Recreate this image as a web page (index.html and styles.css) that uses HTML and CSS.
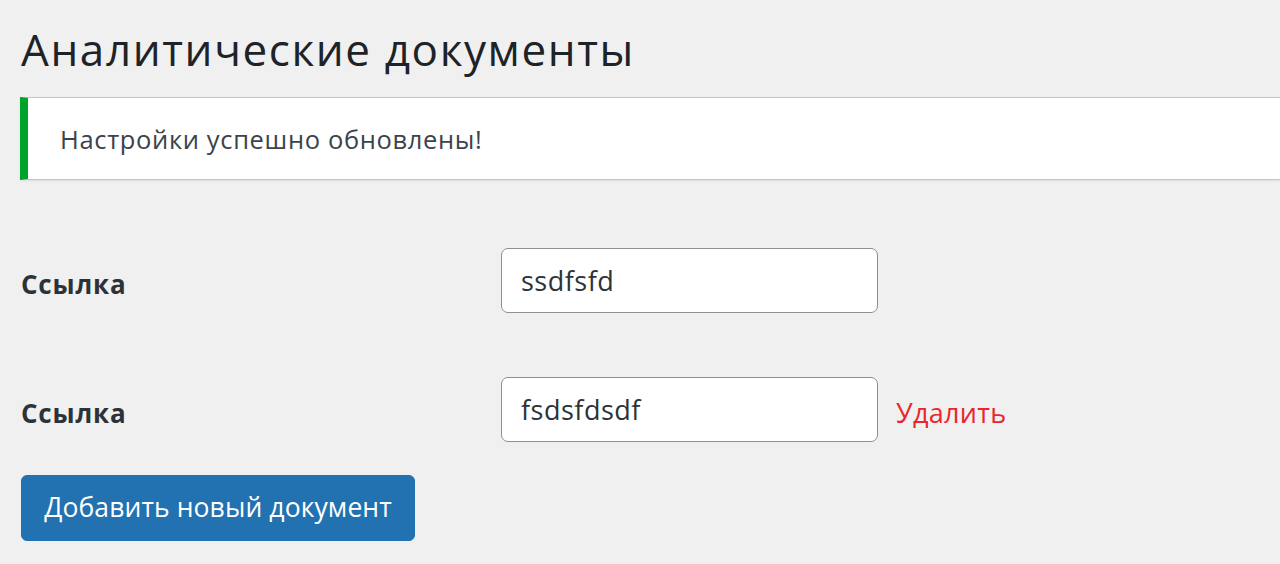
FILE: index.html
```html
<!DOCTYPE html>
<html lang="ru">
<head>
<meta charset="utf-8">
<link rel="stylesheet" href="styles.css">
</head>
<body>
<div class="wrap">
  <h1 class="page-title">Аналитические документы</h1>
  <div class="notice">
    <p>Настройки успешно обновлены!</p>
  </div>
  <form class="docs-form">
    <div class="field-row">
      <label class="field-label">Ссылка</label>
      <div class="field-control">
        <input class="text-input" type="text" value="ssdfsfd">
      </div>
    </div>
    <div class="field-row">
      <label class="field-label">Ссылка</label>
      <div class="field-control">
        <input class="text-input" type="text" value="fsdsfdsdf">
        <a class="delete-link" href="#">Удалить</a>
      </div>
    </div>
    <button class="button-primary" type="button">Добавить новый документ</button>
  </form>
</div>
</body>
</html>
```

FILE: styles.css
```css
html, body {
  margin: 0;
  padding: 0;
  background: #f0f0f1;
  overflow: hidden;
}
body {
  font-family: "Open Sans", "Noto Sans", sans-serif;
  color: #3c434a;
}
.wrap {
  padding: 0 0 0 21px;
}
.page-title {
  margin: 0;
  padding: 21px 0 0 0;
  font-size: 44px;
  letter-spacing: 1.6px;
  font-weight: 400;
  line-height: 56px;
  color: #1d2327;
}
.notice {
  margin: 20px 0 0 -1px;
  background: #fff;
  border: 1px solid #c3c4c7;
  border-left: 8px solid #00a32a;
  border-right: none;
  box-shadow: 0 1px 2px rgba(0,0,0,0.08);
  height: 81px;
  display: flex;
  align-items: center;
  padding-left: 32px;
}
.notice p {
  margin: 0;
  font-size: 25.5px;
  letter-spacing: 0.65px;
  color: #3c434a;
}
.docs-form {
  margin-top: 68px;
}
.field-row {
  display: flex;
  align-items: center;
  height: 65px;
  margin-bottom: 64px;
}
.field-row:last-of-type {
  margin-bottom: 33px;
}
.field-label {
  width: 480px;
  font-size: 26px;
  letter-spacing: 0.8px;
  font-weight: 700;
  color: #2c3338;
  padding-top: 7px;
}
.field-control {
  display: flex;
  align-items: center;
}
.text-input {
  box-sizing: border-box;
  width: 377px;
  height: 65px;
  border: 1.5px solid #8c8f94;
  border-radius: 7px;
  background: #fff;
  padding: 0 19px;
  font-family: inherit;
  font-size: 27px;
  letter-spacing: 0.5px;
  color: #2c3338;
}
.delete-link {
  margin-left: 18px;
  padding-top: 6px;
  font-size: 27px;
  letter-spacing: 0.3px;
  color: #e8262b;
  text-decoration: none;
}
.button-primary {
  display: block;
  box-sizing: border-box;
  height: 66px;
  width: 394px;
  margin-left: 0;
  background: #2271b1;
  border: 1px solid #2271b1;
  border-radius: 6px;
  color: #fff;
  font-family: inherit;
  font-size: 26.5px;
  letter-spacing: 0.1px;
  padding: 0 0 2px 0;
}
```
